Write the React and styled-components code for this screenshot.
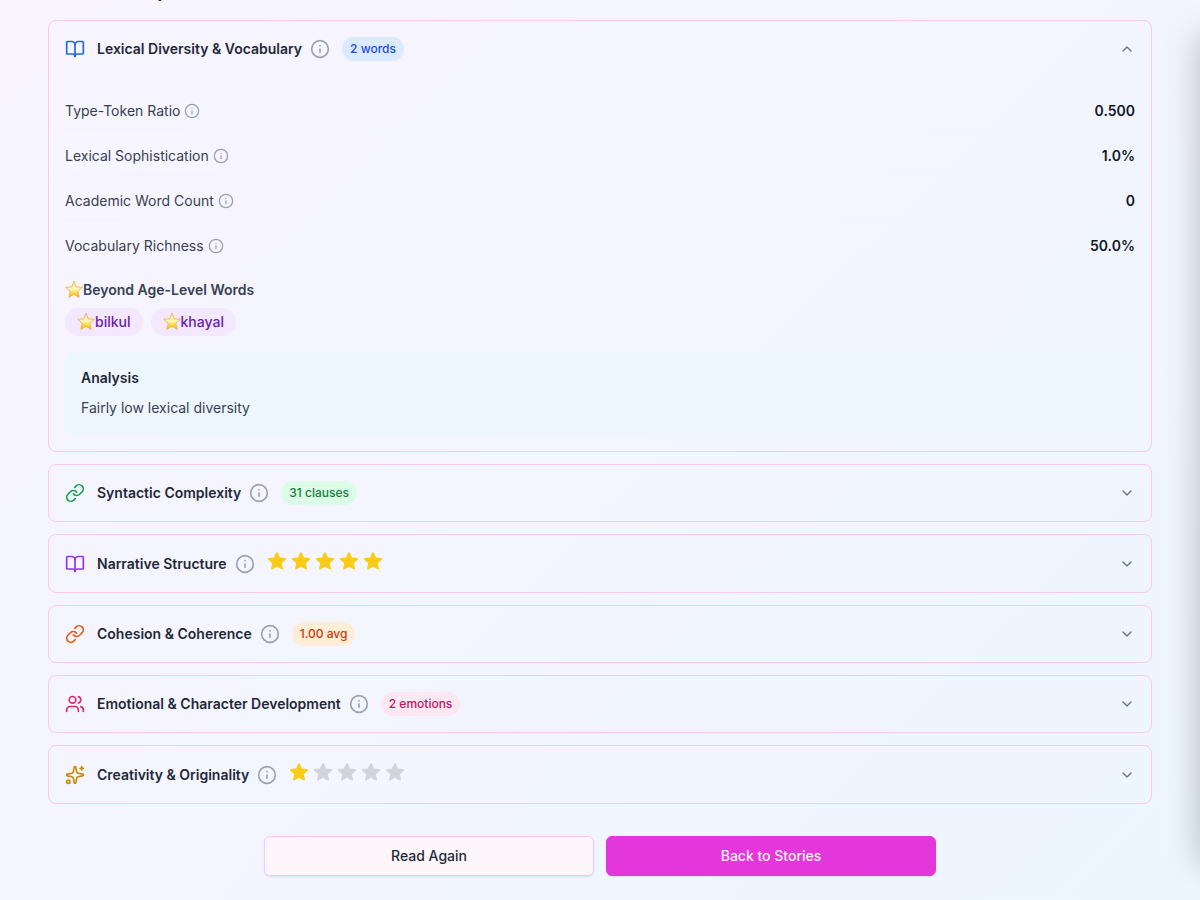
import React, { useState } from "react";
import styled, { createGlobalStyle } from "styled-components";
import { BookOpen, Link, Users, Sparkles, ChevronDown, ChevronUp } from "lucide-react";

const METRICS = [
  { label: "Type-Token Ratio", value: "0.500" },
  { label: "Lexical Sophistication", value: "1.0%" },
  { label: "Academic Word Count", value: "0" },
  { label: "Vocabulary Richness", value: "50.0%" },
];

const SECTIONS = [
  { id: "lexical", title: "Lexical Diversity & Vocabulary", Icon: BookOpen, color: "#2563eb", badge: "2 words", badgeBg: "#dbeafe", badgeColor: "#1d4ed8" },
  { id: "syntactic", title: "Syntactic Complexity", Icon: Link, color: "#16a34a", badge: "31 clauses", badgeBg: "#dcfce7", badgeColor: "#15803d" },
  { id: "narrative", title: "Narrative Structure", Icon: BookOpen, color: "#9333ea", rating: 5 },
  { id: "cohesion", title: "Cohesion & Coherence", Icon: Link, color: "#ea580c", badge: "1.00 avg", badgeBg: "#ffedd5", badgeColor: "#c2410c" },
  { id: "emotional", title: "Emotional & Character Development", Icon: Users, color: "#db2777", badge: "2 emotions", badgeBg: "#fce7f3", badgeColor: "#be185d" },
  { id: "creativity", title: "Creativity & Originality", Icon: Sparkles, color: "#ca8a04", rating: 1 },
];

const WORDS = ["bilkul", "khayal"];

function InfoIcon({ size }) {
  return (
    <svg width={size} height={size} viewBox="0 0 24 24" fill="none" stroke="#9ca3af" strokeWidth="2" strokeLinecap="round" aria-hidden="true">
      <circle cx="12" cy="12" r="10" />
      <path d="M12 16v-4M12 8h.01" />
    </svg>
  );
}

function Star({ filled }) {
  return (
    <svg width="20" height="20" viewBox="0.8 1.200 18.400 18.400" fill={filled ? "#facc15" : "#d1d5db"} aria-hidden="true">
      <path d="M10.868 2.884c-.321-.772-1.415-.772-1.736 0l-1.83 4.401-4.753.381c-.833.067-1.171 1.107-.536 1.651l3.62 3.102-1.106 4.637c-.194.813.691 1.456 1.405 1.02L10 15.591l4.069 2.485c.713.436 1.598-.207 1.404-1.02l-1.106-4.637 3.62-3.102c.635-.544.297-1.584-.536-1.65l-4.752-.382-1.831-4.401Z" />
    </svg>
  );
}

function GlossyStar() {
  return (
    <svg width="18" height="20" viewBox="0 0 18 20" aria-hidden="true">
      <defs>
        <linearGradient id="gloss" x1="0" y1="0" x2="0" y2="1">
          <stop offset="0" stopColor="#fff3a0" />
          <stop offset="0.5" stopColor="#fff6b8" />
          <stop offset="0.75" stopColor="#ffd633" />
          <stop offset="1" stopColor="#f9b91c" />
        </linearGradient>
      </defs>
      <path d="M9 1.2l2.300 5.700 6.100.4-4.700 3.900 1.600 6.200L9 14.200l-5.300 3.200 1.600-6.200L.6 7.300l6.100-.4z" fill="url(#gloss)" stroke="#eda93a" strokeWidth="0.8" strokeLinejoin="round" />
    </svg>
  );
}

function LexicalDetails() {
  return (
    <Details>
      <MetricList>
        {METRICS.map((m) => (
          <Metric key={m.label}>
            <MetricLabel>
              {m.label}
              <InfoIcon size={16} />
            </MetricLabel>
            <MetricValue>{m.value}</MetricValue>
          </Metric>
        ))}
      </MetricList>
      <div>
        <WordsTitle>
          <GlossyStar />
          Beyond Age-Level Words
        </WordsTitle>
        <WordList>
          {WORDS.map((word) => (
            <Word key={word}>
              <GlossyStar />
              {word}
            </Word>
          ))}
        </WordList>
      </div>
      <Analysis>
        <AnalysisTitle>Analysis</AnalysisTitle>
        <AnalysisText>Fairly low lexical diversity</AnalysisText>
      </Analysis>
    </Details>
  );
}

export default function App() {
  const [open, setOpen] = useState("lexical");

  const toggle = (id) => {
    setOpen(open === id ? null : id);
  };

  return (
    <Page>
      <GlobalStyle />
      <Heading>Detailed Report</Heading>
      <Sections>
        {SECTIONS.map(({ id, title, Icon, color, badge, badgeBg, badgeColor, rating }) => (
          <Card key={id}>
            <CardHeader type="button" aria-expanded={open === id} onClick={() => toggle(id)}>
              <Icon size={20} color={color} />
              <CardTitle>
                {title}
                <InfoIcon size={20} />
              </CardTitle>
              {badge && <Badge $bg={badgeBg} $color={badgeColor}>{badge}</Badge>}
              {rating && (
                <Stars role="img" aria-label={`${rating} / 5`}>
                  {[1, 2, 3, 4, 5].map((n) => <Star key={n} filled={n <= rating} />)}
                </Stars>
              )}
              <Chevron>
                {open === id ? <ChevronUp size={16} /> : <ChevronDown size={16} />}
              </Chevron>
            </CardHeader>
            {open === id && id === "lexical" && <LexicalDetails />}
          </Card>
        ))}
      </Sections>
      <Actions>
        <ActionButton type="button">Read Again</ActionButton>
        <ActionButton type="button" $primary>Back to Stories</ActionButton>
      </Actions>
      <Drawer />
    </Page>
  );
}

const GlobalStyle = createGlobalStyle`
  *, *::before, *::after {
    box-sizing: border-box;
  }
  body {
    margin: 0;
    font-family: Inter, "Liberation Sans", sans-serif;
    font-size: 14px;
    line-height: 20px;
    color: #1f2937;
  }
  h2, h3, h4, p, dl, dd, ul {
    margin: 0;
    padding: 0;
  }
  svg {
    display: block;
    flex-shrink: 0;
  }
`
const Page = styled.main`
  display: flow-root;
  min-height: 100vh;
  padding: 0 48px 24px;
  overflow: hidden;
  background: linear-gradient(135deg, #f8f5ff, #f2f5ff 60%, #edf6ff);
`
const Heading = styled.h2`
  margin: -24px 0 16px;
  font-size: 20px;
  line-height: 28px;
  font-weight: 600;
`
const Sections = styled.div`
  display: flex;
  flex-direction: column;
  gap: 12px;
`
const Card = styled.section`
  border: 1px solid #fbc8f0;
  border-radius: 8px;
`
const CardHeader = styled.button`
  display: flex;
  align-items: center;
  gap: 12px;
  width: 100%;
  padding: 16px;
  border: 0;
  background: none;
  color: inherit;
  font: inherit;
  text-align: left;
  cursor: pointer;
`
const CardTitle = styled.span`
  display: flex;
  align-items: center;
  gap: 8px;
  font-weight: 600;
`
const Badge = styled.span`
  padding: 4px 8px;
  border-radius: 12px;
  background: ${({ $bg }) => $bg};
  color: ${({ $color }) => $color};
  font-size: 12px;
  line-height: 16px;
  font-weight: 500;
`
const Stars = styled.span`
  display: flex;
  align-items: flex-start;
  gap: 4px;
  height: 25px;
`
const Chevron = styled.span`
  margin-left: auto;
  color: #64748b;
`
const Details = styled.div`
  display: flex;
  flex-direction: column;
  gap: 16px;
  padding: 16px;
`
const MetricList = styled.dl`
  display: flex;
  flex-direction: column;
  gap: 8px;
`
const Metric = styled.div`
  display: flex;
  justify-content: space-between;
  padding: 8px 0;
  border-bottom: 1px solid #f3f4f6;

  &:last-child {
    border-bottom: 0;
  }
`
const MetricLabel = styled.dt`
  display: flex;
  align-items: center;
  gap: 4px;
  color: #374151;
`
const MetricValue = styled.dd`
  font-weight: 600;
  color: #111827;
`
const WordsTitle = styled.h4`
  display: flex;
  margin-bottom: 8px;
  font-size: 14px;
  font-weight: 600;
  color: #374151;
`
const WordList = styled.ul`
  display: flex;
  gap: 8px;
  list-style: none;
`
const Word = styled.li`
  display: flex;
  padding: 4px 12px;
  border-radius: 14px;
  background: #f3e8ff;
  color: #6b21a8;
  font-weight: 500;
`
const Analysis = styled.div`
  padding: 16px;
  border-radius: 8px;
  background: #eef6ff;
`
const AnalysisTitle = styled.h4`
  margin-bottom: 8px;
  font-size: 14px;
  font-weight: 600;
`
const AnalysisText = styled.p`
  line-height: 23px;
  color: #374151;
`
const Actions = styled.div`
  display: flex;
  gap: 12px;
  max-width: 672px;
  margin: 32px auto 0;
`
const ActionButton = styled.button`
  flex: 1;
  height: 40px;
  border: 1px solid ${({ $primary }) => ($primary ? "#e336db" : "#fbc8f0")};
  border-radius: 6px;
  background: ${({ $primary }) => ($primary ? "#e336db" : "#fdf7fb")};
  color: ${({ $primary }) => ($primary ? "#fdf2fa" : "#1f2937")};
  box-shadow: 0 1px 2px rgba(0, 0, 0, 0.1);
  font: inherit;
  font-weight: 500;
  cursor: pointer;
`
/* closed side panel, only its shadow reaches into the page */
const Drawer = styled.aside`
  position: fixed;
  top: 36px;
  bottom: 36px;
  left: 100%;
  width: 320px;
  box-shadow: 0 0 32px rgba(0, 0, 0, 0.25);
`
